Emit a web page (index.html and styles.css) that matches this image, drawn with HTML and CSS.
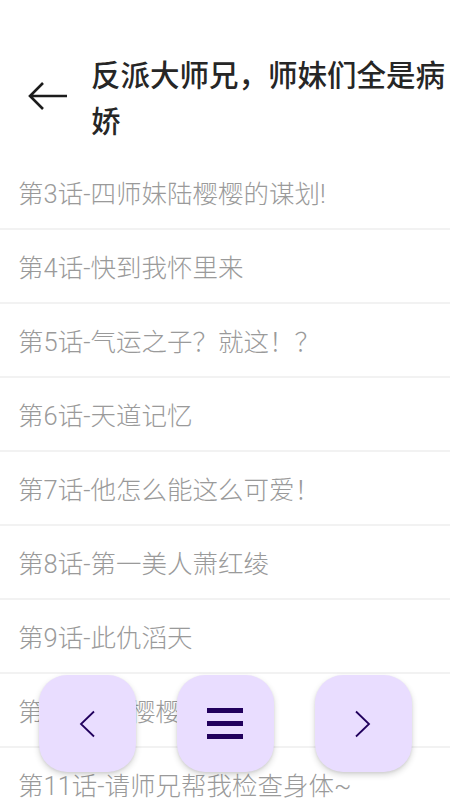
FILE: index.html
```html
<!DOCTYPE html>
<html lang="zh-CN">
  <head>
    <meta charset="UTF-8" />
    <meta name="viewport" content="width=device-width, initial-scale=1.0" />
    <title>反派大师兄，师妹们全是病娇</title>
    <link rel="stylesheet" href="styles.css">
  </head>
  <body>
    <div class="header">
      <a class="back">
        <svg width="40" height="28" viewBox="0 0 40 28">
          <path d="M39 14H2M15 1L2 14l13 13" fill="none" stroke="#1c1c1c" stroke-width="2.6" />
        </svg>
      </a>
      <h1 class="title">反派大师兄，师妹们全是病娇</h1>
    </div>
    <ul class="chapters">
      <li>第3话-四师妹陆樱樱的谋划!</li>
      <li>第4话-快到我怀里来</li>
      <li>第5话-气运之子？就这！？</li>
      <li>第6话-天道记忆</li>
      <li>第7话-他怎么能这么可爱！</li>
      <li>第8话-第一美人萧红绫</li>
      <li>第9话-此仇滔天</li>
      <li>第10话-陆樱樱的目的？</li>
      <li>第11话-请师兄帮我检查身体~</li>
      <li>第12话-大师兄的秘密</li>
    </ul>
    <div class="pager">
      <a class="pager-btn">
        <svg width="16" height="28" viewBox="0 0 16 28">
          <path d="M15 1.5L2 14l13 12.5" fill="none" stroke="#21005d" stroke-width="1.8" />
        </svg>
      </a>
      <a class="pager-btn">
        <svg width="36" height="31" viewBox="0 0 36 31">
          <rect x="0" y="0" width="36" height="5" fill="#21005d" />
          <rect x="0" y="13" width="36" height="5" fill="#21005d" />
          <rect x="0" y="26" width="36" height="5" fill="#21005d" />
        </svg>
      </a>
      <a class="pager-btn">
        <svg width="16" height="28" viewBox="0 0 16 28">
          <path d="M1 1.5L14 14L1 26.5" fill="none" stroke="#21005d" stroke-width="1.8" />
        </svg>
      </a>
    </div>
  </body>
</html>
```

FILE: styles.css
```css
* {
  box-sizing: border-box;
}

body {
  margin: 0;
  background: #ffffff;
  font-family: Roboto, "Noto Sans CJK SC", sans-serif;
  overflow: hidden;
}

.header {
  display: flex;
  align-items: center;
  padding: 50px 0 14px 0;
}
.header .back {
  flex: none;
  width: 91px;
  padding-left: 28px;
  display: flex;
  align-items: center;
}
.header .back svg {
  display: block;
}
.title {
  margin: 0;
  font-family: "Noto Sans CJK SC", sans-serif;
  font-size: 29.5px;
  line-height: 46px;
  font-weight: 500;
  color: #262626;
}

.chapters {
  list-style: none;
  margin: 0;
  padding: 0;
}
.chapters li {
  height: 74px;
  display: flex;
  align-items: center;
  padding: 0 18px 1px;
  border-bottom: 2px solid #f2f2f2;
  font-size: 25.5px;
  font-weight: 300;
  color: #9a9a9a;
  white-space: nowrap;
}

.pager {
  position: fixed;
  left: 0;
  right: 0;
  bottom: 28px;
  display: flex;
  justify-content: center;
  gap: 41px;
}
.pager-btn {
  width: 97px;
  height: 97px;
  border-radius: 28px;
  background: #e9ddff;
  display: flex;
  align-items: center;
  justify-content: center;
  box-shadow: 0 3px 6px rgba(0, 0, 0, 0.16), 0 1px 3px rgba(0, 0, 0, 0.08);
}
```
